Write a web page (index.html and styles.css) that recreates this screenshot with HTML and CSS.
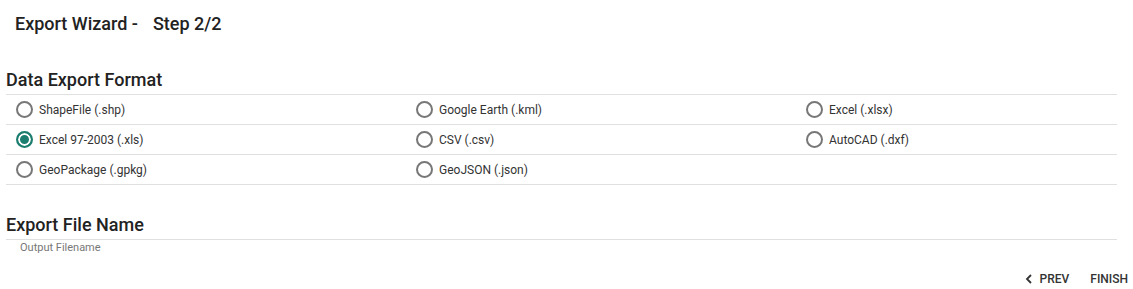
FILE: index.html
```html
<!DOCTYPE html>
<html>
<head>
<meta charset="utf-8">
<link rel="stylesheet" href="styles.css">
</head>
<body>
<div class="wizard">
  <h1 class="title"><span>Export Wizard -</span><span class="step">Step 2/2</span></h1>

  <h2 class="section-title first">Data Export Format</h2>
  <div class="formats">
    <label class="opt"><input type="radio" name="fmt"><span>ShapeFile (.shp)</span></label>
    <label class="opt"><input type="radio" name="fmt"><span>Google Earth (.kml)</span></label>
    <label class="opt"><input type="radio" name="fmt"><span>Excel (.xlsx)</span></label>
    <label class="opt"><input type="radio" name="fmt" checked><span>Excel 97-2003 (.xls)</span></label>
    <label class="opt"><input type="radio" name="fmt"><span>CSV (.csv)</span></label>
    <label class="opt"><input type="radio" name="fmt"><span>AutoCAD (.dxf)</span></label>
    <label class="opt"><input type="radio" name="fmt"><span>GeoPackage (.gpkg)</span></label>
    <label class="opt"><input type="radio" name="fmt"><span>GeoJSON (.json)</span></label>
    <div class="opt empty"></div>
  </div>

  <h2 class="section-title second">Export File Name</h2>
  <input class="filename" type="text" placeholder="Output Filename">

  <div class="actions">
    <button class="btn prev"><svg width="8" height="10" viewBox="0 0 8 10"><path d="M6 1 L2 5 L6 9" fill="none" stroke="#333" stroke-width="1.8"/></svg>PREV</button>
    <button class="btn">FINISH</button>
  </div>
</div>
</body>
</html>
```
FILE: styles.css
```css
* { box-sizing: border-box; }
html, body { margin: 0; padding: 0; background: #fff; }
body {
  font-family: Roboto, "Liberation Sans", Arial, sans-serif;
  color: #222;
  width: 1133px;
  height: 289px;
  overflow: hidden;
}
.wizard { padding: 0 16px 0 6px; }
.title {
  margin: 0;
  padding: 13px 0 0 9px;
  font-size: 18px;
  line-height: 22px;
  font-weight: 500;
  color: #222;
}
.title .step { margin-left: 15px; }
.section-title {
  margin: 0;
  font-size: 18px;
  line-height: 22px;
  font-weight: 500;
  color: #222;
  padding-bottom: 3px;
}
.section-title.first { margin-top: 34px; }
.section-title.second {
  margin-top: 29px;
  border-bottom: 1px solid #e0e0e0;
  padding-bottom: 3px;
}
.formats {
  display: grid;
  grid-template-columns: 400px 390px 1fr;
  border-top: 1px solid #e0e0e0;
}
.opt {
  display: flex;
  align-items: center;
  height: 30px;
  padding-left: 10px;
  border-bottom: 1px solid #e0e0e0;
  font-size: 12px;
  color: #333;
  gap: 6px;
}
.opt input {
  appearance: none;
  -webkit-appearance: none;
  margin: 0;
  width: 17px;
  height: 17px;
  border: 2px solid #777;
  border-radius: 50%;
  background: #fff;
}
.opt input:checked {
  border-color: #1b7e6e;
  background: #1b7e6e;
  box-shadow: inset 0 0 0 2px #fff;
}
.filename {
  display: block;
  width: 100%;
  border: none;
  outline: none;
  height: 14px;
  padding: 0 0 0 14px;
  font-family: Roboto, "Liberation Sans", Arial, sans-serif;
  font-size: 11px;
  color: #333;
  background: transparent;
}
.filename::placeholder { color: #777; }
.actions {
  display: flex;
  justify-content: flex-end;
  margin-top: 15px;
  margin-right: -16px;
}
.btn {
  border: none;
  background: transparent;
  font-family: Roboto, "Liberation Sans", Arial, sans-serif;
  font-size: 12px;
  font-weight: 500;
  color: #333;
  height: 20px;
  padding: 0 5px;
  margin-left: 11px;
  display: flex;
  align-items: center;
  gap: 7px;
}
```
